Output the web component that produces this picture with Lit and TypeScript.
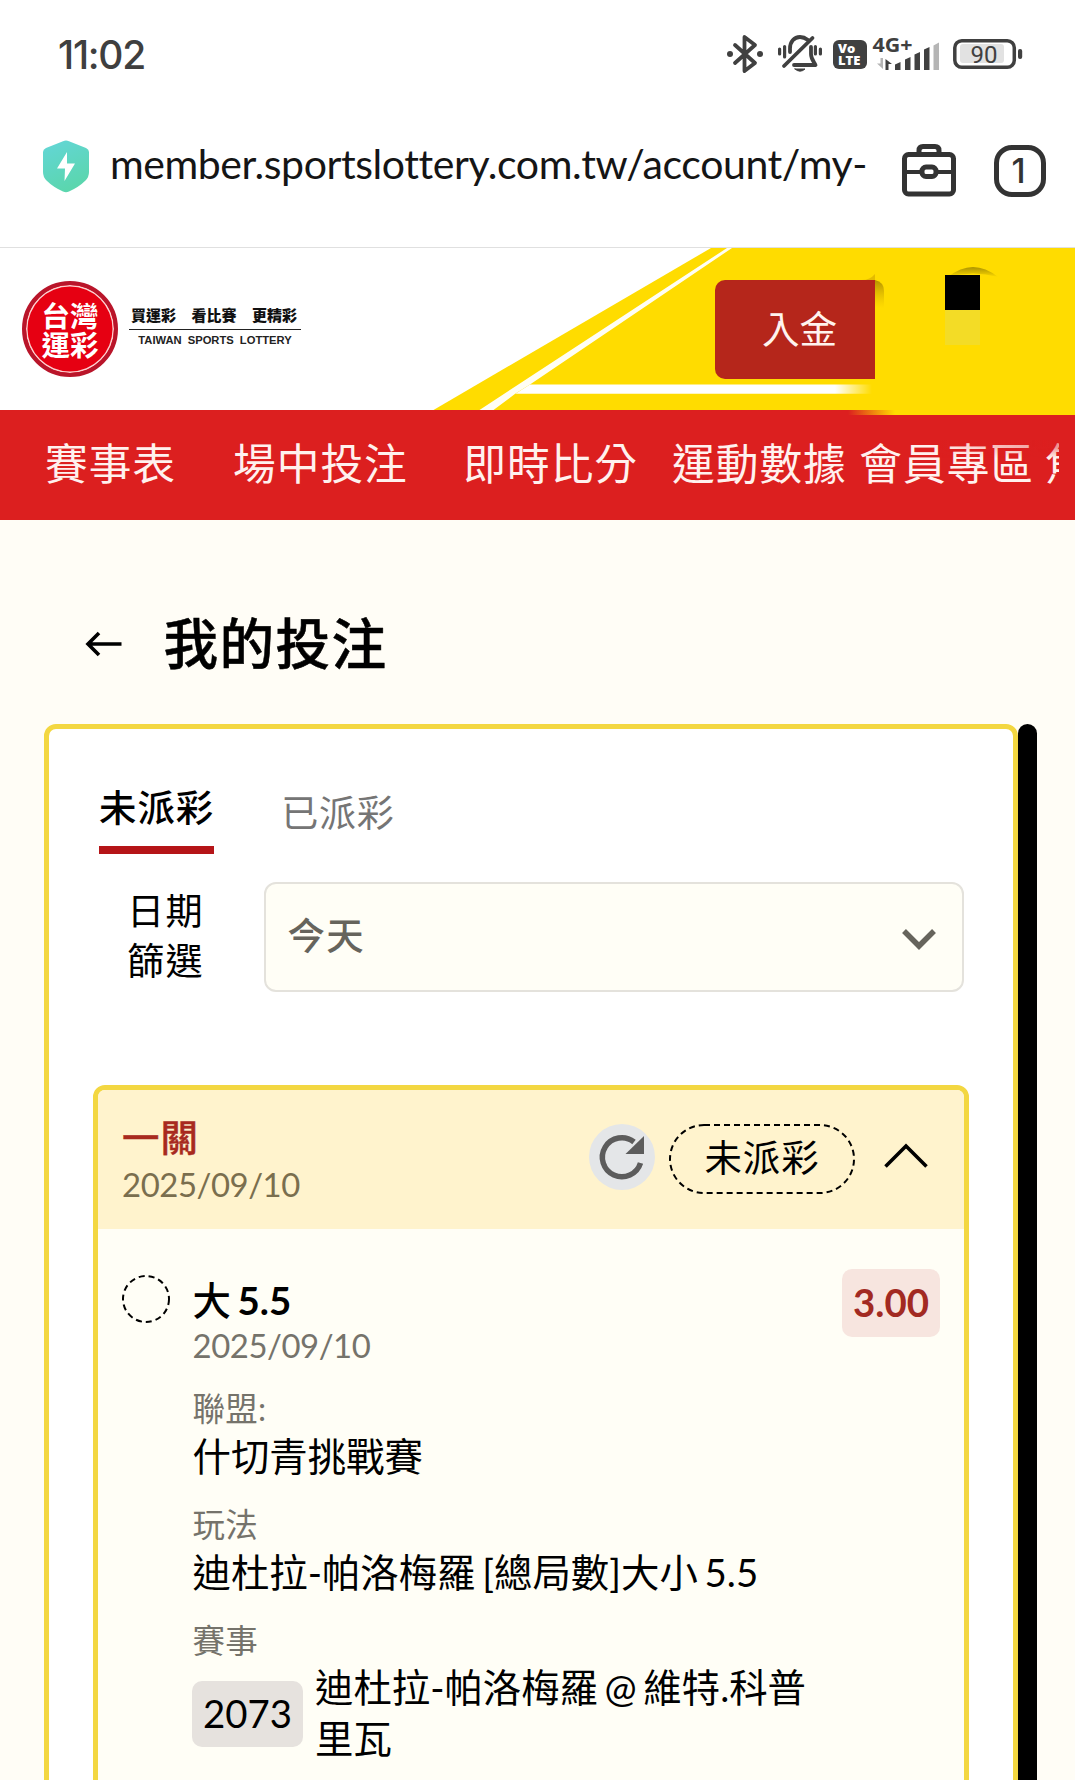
import { LitElement, html, css, svg } from "lit";
import { customElement } from "lit/decorators.js";

interface BetField {
  label: string;
  value: string;
}

const NAV_ITEMS = [
  { text: "賽事表", cls: "n1" },
  { text: "場中投注", cls: "n2" },
  { text: "即時比分", cls: "n3" },
  { text: "運動數據", cls: "n4" },
  { text: "會員專區", cls: "n5" },
  { text: "焦點", cls: "n6" },
];

const FIELDS: BetField[] = [
  { label: "聯盟:", value: "什切青挑戰賽" },
  { label: "玩法", value: "迪杜拉-帕洛梅羅 [總局數]大小 5.5" },
];

// Left edge and height of each lit signal bar.
const SIGNAL = [
  { x: 23, h: 7 },
  { x: 33, h: 12 },
  { x: 42.5, h: 17 },
  { x: 52, h: 22 },
];

@customElement("phone-status")
class PhoneStatus extends LitElement {
  static styles = css`
    :host { display: block; }
    .bar { display: flex; align-items: center; height: 108px; padding: 0 52px 0 58px; box-sizing: border-box; color: #3f3f3f; }
    .time { font: 500 39px/48px Inter, sans-serif; letter-spacing: -1.3px; flex: 1; padding-top: 2px; }
    .icons { display: flex; align-items: center; }
    svg { display: block; overflow: visible; }
    .bt { margin-right: 15px; }
    .bell { margin-right: 11px; }
    .volte { margin-right: 5px; display: flex; flex-direction: column; justify-content: center; width: 34px; height: 29px; border-radius: 6px; background: #404040; color: #fff; font: 800 13px/12px "Open Sans", sans-serif; box-sizing: border-box; padding-left: 5px; }
    .signal { margin-right: 14px; }
    .net { font: 700 19px "Open Sans", sans-serif; fill: #404040; }
    .pct { font: 400 23px Roboto, sans-serif; fill: #404040; }
  `;
  render() {
    return html`<div class="bar">
      <div class="time">11:02</div>
      <div class="icons">
        <svg class="bt" width="36" height="40" viewBox="0 0 36 40" fill="none" stroke="#404040" stroke-width="3.800" stroke-linejoin="round" stroke-linecap="round">
          <path d="M8 11 L28 29 L17.500 37 V3 L28 11 L8 29" />
          <circle cx="3" cy="20" r="3" fill="#404040" stroke="none" /><circle cx="33" cy="20" r="3" fill="#404040" stroke="none" />
        </svg>
        <svg class="bell" width="44" height="38" viewBox="0 0 44 38" fill="none" stroke="#404040" stroke-width="3.800" stroke-linecap="round" stroke-linejoin="round">
          <path d="M12 17 V13.500 C12 7 16 2 22 2 C26 2 28 3.500 30 5" />
          <path d="M6 31 L34.500 3" />
          <path d="M33 12 V19 C33 24 36 27 37.500 30 H16" />
          <path d="M17 34 H27 Q22 38.500 17 34 Z" fill="#404040" stroke-width="1" />
          <path d="M1.600 14 V19 M6.600 11.500 V22 M37.400 11.500 V19 M42.400 14 V19" stroke-width="3.200" />
        </svg>
        <div class="volte"><span>Vo</span><span>LTE</span></div>
        <svg class="signal" width="67" height="34" viewBox="0 0 67 34">
          <text class="net" x="0.500" y="15" textLength="40" lengthAdjust="spacingAndGlyphs">4G+</text>
          <path d="M11 21 V32 L5 26.500 H8.500 V21 Z" fill="#b5b5b5" />
          <path d="M13.500 33 V22 L20 27 H16.500 V33 Z" fill="#404040" />
          ${SIGNAL.map((b) => svg`<path d="M${b.x} 33 V${34.5 - b.h} Q${b.x + 5} ${32 - b.h} ${b.x + 5.5} ${32 - b.h} V33 Z" fill="#404040" />`)}
          <path d="M61.500 33 V8.500 L67 5.500 V33 Z" fill="#b5b5b5" />
        </svg>
        <svg width="70" height="30" viewBox="0 0 70 30">
          <rect x="1.800" y="1.800" width="59.500" height="26.400" rx="7" fill="none" stroke="#404040" stroke-width="3.500" />
          <rect x="7" y="5" width="44" height="19" rx="3" fill="#e2e2e2" />
          <rect x="65" y="10" width="4.200" height="10" rx="2" fill="#404040" />
          <text class="pct" x="31" y="23.500" text-anchor="middle" textLength="27" lengthAdjust="spacingAndGlyphs">90</text>
        </svg>
      </div>
    </div>`;
  }
}

@customElement("address-bar")
class AddressBar extends LitElement {
  static styles = css`
    :host { display: block; }
    .bar { display: flex; align-items: flex-start; height: 140px; padding: 32px 29px 0 43px; box-sizing: border-box; border-bottom: 1px solid #e0e0e0; }
    .url { flex: 1; white-space: nowrap; margin: -2px 0 0 21px; font: 400 41px/52px Lato, sans-serif; letter-spacing: -0.42px; color: #151515; }
    svg { display: block; }
    .case { margin: 4px 38px 0 0; }
    .tabs { margin-top: 5px; width: 52px; height: 52px; box-sizing: border-box; border: 5px solid #333; border-radius: 18px; text-align: center; font: 500 34px/41px Inter, sans-serif; color: #333; text-indent: -3px; }
  `;
  render() {
    return html`<div class="bar">
      <svg width="46" height="53" viewBox="0 0 46 53">
        <defs>
          <linearGradient id="g" x1="0" y1="0" x2="0.4" y2="1">
            <stop offset="0" stop-color="#63d6d8" /><stop offset="1" stop-color="#5bd6ae" />
          </linearGradient>
        </defs>
        <path d="M20 1.200 Q23 0 26 1.200 L43 8 Q46 9.500 46 12 V32 Q46 37 42.500 40.500 Q36 47 26 51.500 Q23 53 20 51.500 Q10 47 3.500 40.500 Q0 37 0 32 V12 Q0 9.500 3 8 Z" fill="url(#g)" />
        <path d="M24 12 L14 28.500 H22 L21.500 41 L32 23.500 H24 Z" fill="#fff" />
      </svg>
      <div class="url">member.sportslottery.com.tw/account/my-</div>
      <svg class="case" width="54" height="53" viewBox="0 0 54 53" fill="none" stroke="#333" stroke-width="5">
        <rect x="2.500" y="10.500" width="49" height="39.500" rx="4" />
        <path d="M17 10 V6.500 Q17 2.500 21 2.500 H33 Q37 2.500 37 6.500 V10" />
        <path d="M3 28 H20 M34 28 H51" stroke-width="4" />
        <rect x="20" y="23" width="14" height="9.500" rx="4" />
      </svg>
      <div class="tabs">1</div>
    </div>`;
  }
}

@customElement("site-header")
class SiteHeader extends LitElement {
  static styles = css`
    :host { display: block; font-family: Lato, "Noto Sans CJK TC", sans-serif; }
    .banner { position: relative; z-index: 1; height: 162px; display: flex; align-items: flex-start; background: #fff; }
    .art { position: absolute; left: 0; top: 0; display: block; }
    .seal { position: relative; width: 96px; height: 96px; margin: 33px 0 0 22px; border-radius: 50%; background: #e60012; border: 4px solid #b9152a; box-shadow: inset 0 0 0 1.5px #fbd0d0; box-sizing: border-box; display: flex; flex-direction: column; align-items: center; justify-content: center; color: #fff; font: 700 28.5px/29px "Noto Sans CJK TC", sans-serif; }
    .words { position: relative; width: 172px; margin: 56px 0 0 11px; }
    .slogan { display: flex; gap: 15.5px; padding-left: 2px; height: 25px; font: 900 15px/22px "Noto Sans CJK TC", sans-serif; color: #111; border-bottom: 1px solid #222; white-space: nowrap; }
    .en { font: 700 11.2px/20px "Liberation Sans", Arial, sans-serif; word-spacing: 3px; text-align: center; white-space: nowrap; color: #222; }
    .deposit { position: relative; width: 160px; height: 99px; margin: 32px 0 0 414px; border-radius: 10px 0 0 10px; background: #b5261b; color: #fff3ee; font-size: 37.6px; line-height: 97px; text-indent: 47px; }
    .mask { position: relative; width: 35px; margin: 27px 0 0 70px; }
    .dark { height: 35px; background: #000; }
    .pale { height: 35px; background: #f3dc26; }
    .nav { position: relative; height: 110px; background: #dc1f1f; }
    .track { display: flex; width: 1059px; height: 101px; box-sizing: border-box; padding-left: 44.5px; overflow: hidden; align-items: center; color: #fff1ee; font-size: 42.7px; letter-spacing: 1px; white-space: nowrap; }
    .track span { flex: none; }
    .n1 { margin-left: 0.5px; }
    .n2 { margin-left: 57px; }
    .n3 { margin-left: 55.5px; }
    .n4 { margin-left: 34px; }
    .n5 { margin-left: 12.5px; }
    .n6 { margin-left: 11px; }
    .haze { position: absolute; left: 930px; top: 30px; width: 130px; height: 18px; background: linear-gradient(90deg, rgba(220, 31, 31, 0), rgba(220, 31, 31, 0.45)); -webkit-mask: linear-gradient(#000 40%, transparent); mask: linear-gradient(#000 40%, transparent); }
  `;
  render() {
    return html`
      <div class="banner">
        <svg class="art" width="1075" height="168" viewBox="0 0 1075 168">
          <defs>
            <linearGradient id="edge" gradientUnits="userSpaceOnUse" x1="848" y1="0" x2="895" y2="0">
              <stop offset="0" stop-color="#ffdc00" stop-opacity="0" /><stop offset="1" stop-color="#ffdc00" />
            </linearGradient>
            <linearGradient id="line" gradientUnits="userSpaceOnUse" x1="835" y1="0" x2="872" y2="0">
              <stop offset="0" stop-color="#fff" /><stop offset="1" stop-color="#fff" stop-opacity="0" />
            </linearGradient>
            <linearGradient id="shade" x1="0" y1="0" x2="0" y2="1">
              <stop offset="0" stop-color="#8a6a00" stop-opacity="0.65" /><stop offset="1" stop-color="#d0a000" stop-opacity="0" />
            </linearGradient>
            <linearGradient id="arc" x1="0" y1="0" x2="0" y2="1">
              <stop offset="0" stop-color="#a08800" stop-opacity="0.85" /><stop offset="1" stop-color="#ffdc00" />
            </linearGradient>
          </defs>
          <path d="M711 0 H1075 V162 H433.500 Z" fill="#ffdc00" />
          <rect x="848" y="161.500" width="227" height="5.500" fill="url(#edge)" />
          <path d="M727 0 H732 L530 136.500 L515.500 145.500 L493.500 162 H479.500 Z" fill="#fffef4" />
          <path d="M530 136.500 H872 V145.700 H515.400 Z" fill="url(#line)" />
          <path d="M862 32 Q870 32 875 26 V32 Z" fill="#c99a00" opacity="0.5" />
          <path d="M875 32 Q884 34 884 43 V60 H875 Z" fill="url(#shade)" />
          <path d="M948 29 Q973 9 998 29 Q973 22 948 29 Z" fill="url(#arc)" />
        </svg>
        <div class="seal"><span>台灣</span><span>運彩</span></div>
        <div class="words">
          <div class="slogan"><span>買運彩</span><span>看比賽</span><span>更精彩</span></div>
          <div class="en">TAIWAN SPORTS LOTTERY</div>
        </div>
        <div class="deposit">入金</div>
        <div class="mask"><div class="dark"></div><div class="pale"></div></div>
      </div>
      <div class="nav">
        <div class="track">${NAV_ITEMS.map((n) => html`<span class=${n.cls}>${n.text}</span>`)}</div>
        <div class="haze"></div>
      </div>
    `;
  }
}

@customElement("bet-card")
class BetCard extends LitElement {
  static styles = css`
    :host { display: block; font-family: Lato, "Noto Sans CJK TC", sans-serif; color: #000; }
    .card { border: 5px solid #f3d741; border-radius: 12px; height: 760px; box-sizing: border-box; background: #fffef6; overflow: hidden; }
    .head { display: flex; align-items: flex-start; height: 139px; box-sizing: border-box; padding: 24px 0 0 24px; background: #fff3cd; }
    .who { flex: 1; }
    .legs { font: 500 37.4px/50px "Noto Sans CJK TC", sans-serif; letter-spacing: 1px; margin-top: -3px; height: 53px; color: #a82a1e; -webkit-text-stroke: 0.4px #a82a1e; }
    .date { position: relative; top: 1px; font-size: 32.9px; line-height: 40px; letter-spacing: -0.45px; color: #75736b; }
    .head .date { color: #7a6e4e; }
    svg { display: block; }
    .refresh { margin: 10px 14px 0 0; }
    .state { margin: 10px 29px 0 0; }
    .pill { position: relative; display: flex; align-items: center; justify-content: center; width: 186px; height: 70px; }
    .pill svg { position: absolute; left: 0; top: 0; }
    .pill span { font-size: 37.4px; letter-spacing: 1px; line-height: 48px; padding-bottom: 2px; }
    .caret { margin: 28px 36px 0 0; }
    .body { display: flex; align-items: flex-start; padding: 46px 24px 0 24px; }
    .ring { margin-right: 22px; flex: none; }
    .info { flex: 1; min-width: 0; padding-left: 0.5px; }
    .pick { font-size: 38.4px; line-height: 50px; font-weight: 500; word-spacing: -3px; }
    .pick b { font-weight: 700; }
    .group { margin-top: 20px; }
    .group + .group { margin-top: 19px; }
    .label { position: relative; top: 1px; font-size: 32.5px; letter-spacing: 0.3px; line-height: 46px; color: #75736b; }
    .value { font-size: 38.4px; line-height: 50px; height: 51px; white-space: nowrap; word-spacing: -3px; }
    .match { display: flex; align-items: center; gap: 12px; }
    .code { flex: none; width: 111px; height: 66px; border-radius: 10px; background: #e6e2de; text-align: center; font-size: 38.4px; line-height: 65px; margin-left: -0.5px; }
    .teams { width: 505px; font-size: 38.4px; line-height: 51px; word-spacing: -3.2px; margin-top: -1px; }
    .odds { flex: none; width: 98px; height: 68px; margin: -6px 0 0 -98px; border-radius: 10px; background: #f7e5df; color: #a22a22; text-align: center; font-weight: 700; font-size: 38.4px; line-height: 67px; }
  `;
  render() {
    return html`<div class="card">
      <div class="head">
        <div class="who">
          <div class="legs">一關</div>
          <div class="date">2025/09/10</div>
        </div>
        <svg class="refresh" width="66" height="66" viewBox="0 0 66 66">
          <circle cx="33" cy="33" r="33" fill="#e4e6e8" />
          <path d="M51.500 39 A19.500 19.500 0 1 1 45 18" fill="none" stroke="#5c5c5c" stroke-width="5.500" />
          <path d="M55 12 V30 H36.500 Z" fill="#5c5c5c" />
        </svg>
        <div class="pill state">
          <svg width="186" height="70" viewBox="0 0 186 70"><rect x="1" y="1" width="184" height="68" rx="34" fill="none" stroke="#000" stroke-width="2" stroke-dasharray="6 4" /></svg>
          <span>未派彩</span>
        </div>
        <svg class="caret" width="44" height="26" viewBox="0 0 44 26"><path d="M1.500 24.500 L22 4 L42.500 24.500" fill="none" stroke="#000" stroke-width="3.600" /></svg>
      </div>
      <div class="body">
        <svg class="ring" width="48" height="48" viewBox="0 0 48 48"><circle cx="24" cy="24" r="23" fill="none" stroke="#000" stroke-width="2" stroke-dasharray="6.030 4" /></svg>
        <div class="info">
          <div class="pick">大 <b>5.5</b></div>
          <div class="date">2025/09/10</div>
          ${FIELDS.map((f) => html`<div class="group"><div class="label">${f.label}</div><div class="value">${f.value}</div></div>`)}
          <div class="group">
            <div class="label">賽事</div>
            <div class="match">
              <div class="code">2073</div>
              <div class="teams">迪杜拉-帕洛梅羅 @ 維特.科普里瓦</div>
            </div>
          </div>
        </div>
        <div class="odds">3.00</div>
      </div>
    </div>`;
  }
}

@customElement("app-root")
class AppRoot extends LitElement {
  static styles = css`
    :host { display: block; width: 1075px; height: 1780px; overflow: hidden; background: #fff; font-family: Lato, "Noto Sans CJK TC", sans-serif; color: #000; }
    .page { height: 1260px; overflow: hidden; background: #fffdf6; }
    .title { display: flex; align-items: center; height: 204px; box-sizing: border-box; padding: 43px 0 0 85px; }
    .title h1 { margin: 0 0 5px 41.5px; font: 500 54.6px/70px "Noto Sans CJK TC", sans-serif; letter-spacing: 1.4px; -webkit-text-stroke: 0.5px #000; }
    svg { display: block; }
    .frame { display: flex; padding-left: 44px; height: 1100px; }
    .panel { width: 974px; box-sizing: border-box; border: 5px solid #f3d741; border-radius: 12px; background: #fff; padding-left: 44px; }
    .rail { width: 19px; background: #000; border-radius: 10px 10px 0 0; }
    .tabs { display: flex; align-items: flex-start; padding: 51px 0 0 6px; height: 153px; box-sizing: border-box; }
    .tab { font: 400 37.4px/52px "Noto Sans CJK TC", sans-serif; letter-spacing: 1px; }
    .active { font-weight: 500; height: 74px; box-sizing: border-box; border-bottom: 8px solid #b51518; }
    .idle { margin: 5px 0 0 67px; font-size: 37px; letter-spacing: 0.8px; color: #757575; }
    .filter { display: flex; align-items: center; height: 110px; padding-left: 34px; margin-bottom: 93px; }
    .caption { width: 77px; text-align: center; font-size: 37.2px; letter-spacing: 1.2px; line-height: 50px; padding-bottom: 2px; white-space: nowrap; }
    .select { display: flex; align-items: center; justify-content: space-between; width: 700px; height: 110px; margin-left: 60px; box-sizing: border-box; border: 2px solid #e4e2dc; border-radius: 12px; background: #fffef6; padding: 0 26px 0 21.500px; font: 500 37.4px/50px "Noto Sans CJK TC", sans-serif; letter-spacing: 1.4px; color: #66645c; }
    .select span { padding-bottom: 6px; }
    .select svg { margin-top: 3px; }
    .wrap { width: 876px; }
  `;
  render() {
    return html`
      <phone-status></phone-status>
      <address-bar></address-bar>
      <site-header></site-header>
      <div class="page">
        <div class="title">
          <svg width="37" height="26" viewBox="0 0 37 26"><path d="M36.500 13 H3 M14 2 L3 13 L14 24" fill="none" stroke="#000" stroke-width="3.600" /></svg>
          <h1>我的投注</h1>
        </div>
        <div class="frame">
          <div class="panel">
            <div class="tabs">
              <div class="tab active">未派彩</div>
              <div class="tab idle">已派彩</div>
            </div>
            <div class="filter">
              <div class="caption">日期<br />篩選</div>
              <div class="select">
                <span>今天</span>
                <svg width="34" height="22" viewBox="0 0 34 22"><path d="M2 3 L17 18 L32 3" fill="none" stroke="#66645c" stroke-width="5.500" /></svg>
              </div>
            </div>
            <div class="wrap"><bet-card></bet-card></div>
          </div>
          <div class="rail"></div>
        </div>
      </div>
    `;
  }
}
